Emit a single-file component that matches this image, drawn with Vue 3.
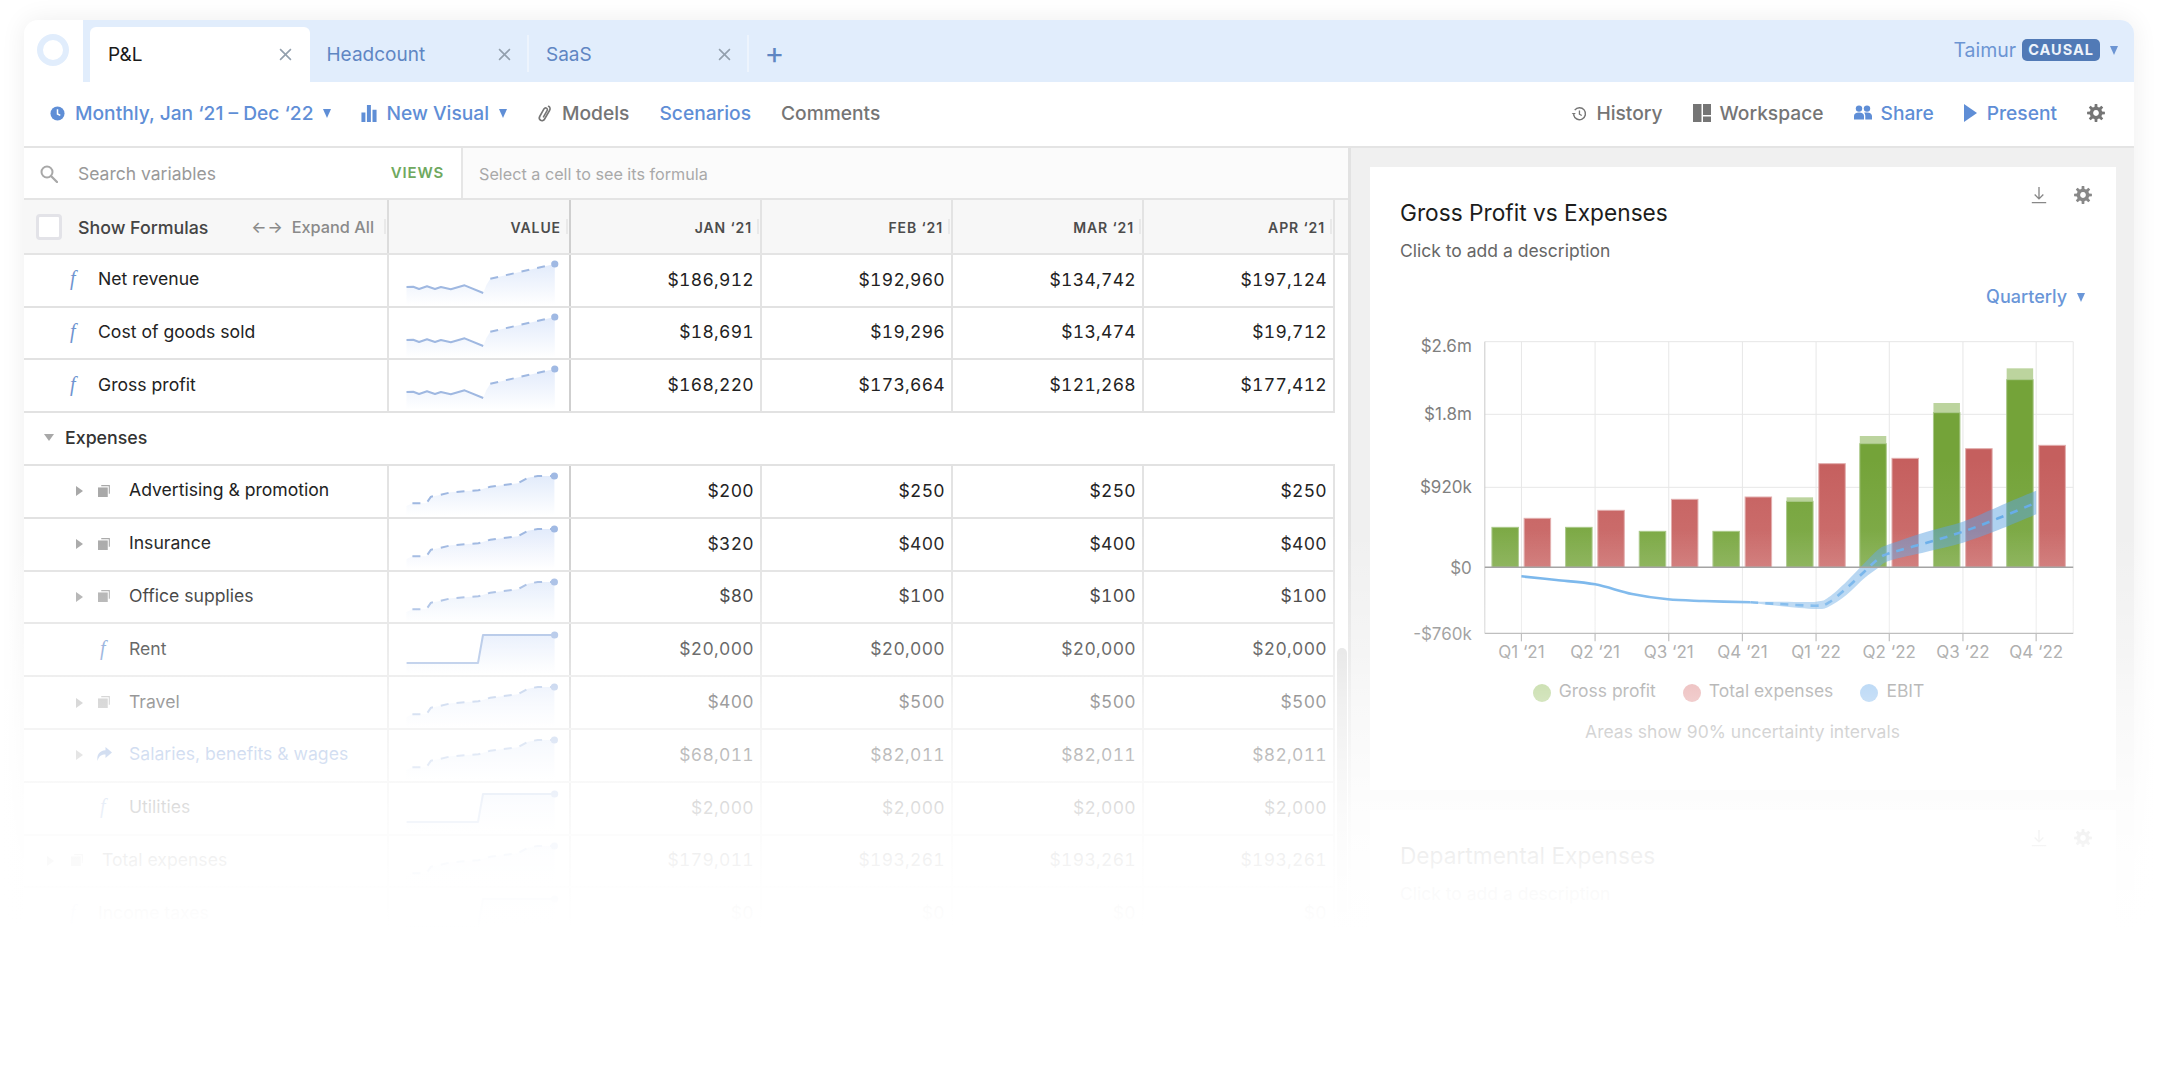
<script setup>
const zx = (v) => 1400 + v / 2.24 - 1370
const zy = (v) => 320 + v / 3 - 330
const Z = (pts) => pts.map(([x, y]) => [zx(x), zy(y)])

function smooth(pts, cont = false) {
  let d = cont ? '' : `M${pts[0][0].toFixed(1)} ${pts[0][1].toFixed(1)}`
  for (let i = 0; i < pts.length - 1; i++) {
    const p0 = pts[i - 1] || pts[i]
    const p1 = pts[i]
    const p2 = pts[i + 1]
    const p3 = pts[i + 2] || p2
    const c1 = [p1[0] + (p2[0] - p0[0]) / 6, p1[1] + (p2[1] - p0[1]) / 6]
    const c2 = [p2[0] - (p3[0] - p1[0]) / 6, p2[1] - (p3[1] - p1[1]) / 6]
    d += `C${c1[0].toFixed(1)} ${c1[1].toFixed(1)} ${c2[0].toFixed(1)} ${c2[1].toFixed(1)} ${p2[0].toFixed(1)} ${p2[1].toFixed(1)}`
  }
  return d
}

const gridX = [272, 437, 602, 767, 932, 1096, 1261, 1425].map(zx)
const quarterLabels = ['Q1 ‘21', 'Q2 ‘21', 'Q3 ‘21', 'Q4 ‘21', 'Q1 ‘22', 'Q2 ‘22', 'Q3 ‘22', 'Q4 ‘22']
const gridY = [283, 502].map(zy)
const top = zy(65)
const base = zy(742)
const bottom = zy(940)
const left = zx(190)
const right = zx(1508)
const yLabels = [
  ['$2.6m', zy(77)],
  ['$1.8m', zy(283)],
  ['$920k', zy(502)],
  ['$0', zy(745)],
  ['-$760k', zy(942)],
]
const greens = [[622], [622], [634], [634], [544, 532], [371, 348], [278, 249], [179, 145]]
const reds = [595, 571, 538, 531, 431, 415, 386, 376]
const bars = gridX.map((g, i) => ({
  x: g,
  gy: zy(greens[i][0]),
  ly: greens[i][1] ? zy(greens[i][1]) : null,
  ry: zy(reds[i]),
}))
const ebitSolid = smooth(Z([[272, 769], [350, 780], [437, 793], [520, 822], [600, 838], [680, 843], [785, 847]]))
const ebitDash = smooth(Z([[785, 847], [850, 852], [932, 857], [960, 848], [1000, 805], [1040, 755], [1070, 718], [1096, 700], [1180, 668], [1261, 635], [1340, 595], [1425, 548]]))
const upper = Z([[770, 846], [850, 845], [932, 845], [960, 832], [1000, 785], [1040, 730], [1070, 690], [1096, 673], [1180, 635], [1261, 605], [1340, 560], [1425, 512]])
const lower = Z([[1425, 583], [1340, 630], [1261, 668], [1180, 695], [1096, 722], [1070, 745], [1040, 775], [1000, 825], [960, 860], [932, 867], [850, 858], [770, 846]])
const band = smooth(upper) + `L${lower[0][0].toFixed(1)} ${lower[0][1].toFixed(1)}` + smooth(lower, true) + 'Z'

const sx = (v) => v / 2.529 - 389
const line = (pts) => 'M' + pts.map((p) => p.map((n) => n.toFixed(1)).join(' ')).join('L')
const A = (pts) => pts.map(([x, y]) => [sx(x), (y - 14) / 3])
const aSolid = A([[1028, 110], [1045, 109], [1060, 116], [1080, 108], [1100, 116], [1115, 110], [1140, 117], [1175, 105], [1222, 128]])
const aDash = A([[1240, 85], [1403, 41]])
const B = (pts) => pts.map(([x, y]) => [sx(x), (y - 645) / 3])
const bDash = B([[1043, 757], [1078, 757], [1090, 737], [1110, 733], [1140, 724], [1210, 718], [1240, 707], [1310, 697], [1335, 680], [1360, 675], [1402, 675]])
const cLine = [[17.6, 39], [89, 39], [94, 11], [165.6, 11]]
const H = 50
const sparks = {
  a: {
    solid: line(aSolid),
    dash: line(aDash),
    fill: line([...aSolid, [sx(1230), 30], ...aDash, [sx(1403), H], [sx(1028), H]]) + 'Z',
    dot: aDash[1],
  },
  b: {
    solid: '',
    dash: line(bDash),
    fill: line([[sx(1028), 40], ...bDash, [sx(1402), H], [sx(1028), H]]) + 'Z',
    dot: bDash[bDash.length - 1],
  },
  c: {
    solid: line(cLine),
    dash: '',
    fill: line([...cLine, [165.6, H], [17.6, H]]) + 'Z',
    dot: cLine[3],
  },
}

function gear() {
  const n = 8
  let d = ''
  for (let i = 0; i < n; i++) {
    const a = (i / n) * Math.PI * 2
    const w = Math.PI / n
    const pt = (r, t) => `${(10 + r * Math.cos(t)).toFixed(2)} ${(10 + r * Math.sin(t)).toFixed(2)}`
    d += `${i ? 'L' : 'M'}${pt(7, a - w * 0.62)}L${pt(10, a - w * 0.36)}L${pt(10, a + w * 0.36)}L${pt(7, a + w * 0.62)}`
  }
  return d + 'ZM10 6.8a3.2 3.2 0 1 0 .01 0Z'
}
const gearPath = gear()

const tabs = [
  { name: 'P&L', active: true },
  { name: 'Headcount' },
  { name: 'SaaS' },
]
const months = ['JAN ‘21', 'FEB ‘21', 'MAR ‘21', 'APR ‘21']
const rows = [
  { label: 'Net revenue', icon: 'f', lvl: 0, spark: 'a', vals: ['$186,912', '$192,960', '$134,742', '$197,124'] },
  { label: 'Cost of goods sold', icon: 'f', lvl: 0, spark: 'a', vals: ['$18,691', '$19,296', '$13,474', '$19,712'] },
  { label: 'Gross profit', icon: 'f', lvl: 0, spark: 'a', vals: ['$168,220', '$173,664', '$121,268', '$177,412'] },
  { section: 'Expenses' },
  { label: 'Advertising & promotion', icon: 'stack', lvl: 1, spark: 'b', vals: ['$200', '$250', '$250', '$250'] },
  { label: 'Insurance', icon: 'stack', lvl: 1, spark: 'b', vals: ['$320', '$400', '$400', '$400'] },
  { label: 'Office supplies', icon: 'stack', lvl: 1, spark: 'b', vals: ['$80', '$100', '$100', '$100'] },
  { label: 'Rent', icon: 'f', lvl: 1, spark: 'c', vals: ['$20,000', '$20,000', '$20,000', '$20,000'] },
  { label: 'Travel', icon: 'stack', lvl: 1, spark: 'b', vals: ['$400', '$500', '$500', '$500'] },
  { label: 'Salaries, benefits & wages', icon: 'link', lvl: 1, spark: 'b', vals: ['$68,011', '$82,011', '$82,011', '$82,011'] },
  { label: 'Utilities', icon: 'f', lvl: 1, spark: 'c', vals: ['$2,000', '$2,000', '$2,000', '$2,000'] },
  { label: 'Total expenses', icon: 'stack', lvl: 0, spark: 'b', vals: ['$179,011', '$193,261', '$193,261', '$193,261'] },
  { label: 'Income taxes', icon: 'f', lvl: 0, spark: 'c', vals: ['$0', '$0', '$0', '$0'] },
]
</script>

<template>
  <div class="page">
    <svg class="defs" width="0" height="0" aria-hidden="true">
      <defs>
        <linearGradient id="sparkFill" x1="0" y1="0" x2="0" y2="1">
          <stop offset="0" stop-color="#e2ebfb" />
          <stop offset="1" stop-color="#ffffff" />
        </linearGradient>
        <linearGradient id="greenBar" gradientUnits="userSpaceOnUse" x1="0" y1="130" x2="0" y2="237">
          <stop offset="0" stop-color="#74a339" />
          <stop offset="1" stop-color="#82ad4d" />
        </linearGradient>
        <linearGradient id="redBar" gradientUnits="userSpaceOnUse" x1="0" y1="130" x2="0" y2="237">
          <stop offset="0" stop-color="#c55f5e" />
          <stop offset="1" stop-color="#cd7170" />
        </linearGradient>
      </defs>
      <symbol id="i-gear" viewBox="0 0 20 20"><path :d="gearPath" fill="currentColor" fill-rule="evenodd" /></symbol>
      <symbol id="i-clock" viewBox="0 0 16 16">
        <circle cx="8" cy="8" r="7.5" fill="currentColor" />
        <path d="M8 3.5V8.5L11 10" fill="none" stroke="#fff" stroke-width="1.6" />
      </symbol>
      <symbol id="i-bars" viewBox="0 0 16 18">
        <path d="M0 8h4.2v10H0zM5.8 0H10v18H5.8zM11.7 5H16v13h-4.3z" fill="currentColor" />
      </symbol>
      <symbol id="i-link" viewBox="0 0 16 18">
        <path d="M11.8 1.4c1.7.9 2 2.8 1 4.4l-5.2 9c-.9 1.6-2.700 2.300-4.200 1.400s-1.800-2.700-.9-4.300l4.400-7.700c.6-1 1.800-1.400 2.700-.9s1.200 1.700.6 2.700l-3.800 6.600" fill="none" stroke="currentColor" stroke-width="1.700" stroke-linecap="round" />
      </symbol>
      <symbol id="i-history" viewBox="0 0 18 18">
        <path d="M4.200 5.200A6.700 6.700 0 1 1 3 10.500" fill="none" stroke="currentColor" stroke-width="1.600" />
        <path d="M.8 8.300h4.600L3.100 11z" fill="currentColor" />
        <path d="M9.500 5.500V9.800l2.600 1.500" fill="none" stroke="currentColor" stroke-width="1.500" />
      </symbol>
      <symbol id="i-work" viewBox="0 0 18 18">
        <path d="M0 0h8.500v18H0zM10 0h8v11h-8zM10 12.500h8V18h-8z" fill="currentColor" />
      </symbol>
      <symbol id="i-users" viewBox="0 0 18 16">
        <circle cx="5" cy="3.600" r="3.200" fill="currentColor" />
        <circle cx="13" cy="3.600" r="3.200" fill="currentColor" />
        <path d="M0 14.500V11c0-2 1.800-3.500 5-3.500S10 9 10 11v3.500zM11.300 14.500V11c0-1.300-.4-2.500-1.300-3.200.8-.3 1.800-.4 3-.4 3.200 0 5 1.600 5 3.600v3.500z" fill="currentColor" />
      </symbol>
      <symbol id="i-play" viewBox="0 0 13 18"><path d="M0 0l13 9L0 18z" fill="currentColor" /></symbol>
      <symbol id="i-down" viewBox="0 0 18 20">
        <path d="M9 1v13M4.200 9.500L9 14.300l4.800-4.800M1 18.500h16" fill="none" stroke="currentColor" stroke-width="1.500" />
      </symbol>
      <symbol id="i-search" viewBox="0 0 18 18">
        <circle cx="7" cy="7" r="5.500" fill="none" stroke="currentColor" stroke-width="2" />
        <path d="M11 11l6 6" fill="none" stroke="currentColor" stroke-width="2.300" stroke-linecap="round" />
      </symbol>
      <symbol id="i-stack" viewBox="0 0 14 14">
        <path d="M3.500 1.800h8.700v8.700" fill="none" stroke="currentColor" stroke-width="1.200" />
        <path d="M0 3.700h10.500V14H0z" fill="currentColor" />
      </symbol>
      <symbol id="i-reply" viewBox="0 0 16 14">
        <path d="M9.500 0L16 5.500 9.500 11V7.600C5.500 7.600 3 8.700 1.600 14 .4 8 3.500 3.500 9.500 3.300z" fill="currentColor" />
      </symbol>
    </svg>

    <div class="app">
      <header class="tabbar">
        <div class="logo"><span class="ring"></span></div>
        <div class="tabs">
          <div v-for="t in tabs" :key="t.name" class="tab" :class="{ active: t.active }">
            <span>{{ t.name }}</span>
            <svg class="close" viewBox="0 0 12 12"><path d="M1 1l10 10M11 1L1 11" /></svg>
          </div>
          <div class="plus">+</div>
          <div class="user">
            <span>Taimur</span>
            <b class="badge">CAUSAL</b>
            <i class="caret"></i>
          </div>
        </div>
      </header>

      <nav class="toolbar">
        <div class="tool blue"><svg class="ic w15"><use href="#i-clock" /></svg>Monthly, Jan ‘21 – Dec ‘22<i class="caret"></i></div>
        <div class="tool blue"><svg class="ic w16"><use href="#i-bars" /></svg>New Visual<i class="caret"></i></div>
        <div class="tool"><svg class="ic w16"><use href="#i-link" /></svg>Models</div>
        <div class="tool blue">Scenarios</div>
        <div class="tool">Comments</div>
        <div class="spacer"></div>
        <div class="tool"><svg class="ic w16"><use href="#i-history" /></svg>History</div>
        <div class="tool"><svg class="ic w18"><use href="#i-work" /></svg>Workspace</div>
        <div class="tool blue"><svg class="ic w18"><use href="#i-users" /></svg>Share</div>
        <div class="tool blue"><svg class="ic w13"><use href="#i-play" /></svg>Present</div>
        <svg class="ic w18 gear"><use href="#i-gear" /></svg>
      </nav>

      <main class="main">
        <section class="sheet">
          <div class="searchrow">
            <div class="search">
              <svg class="ic w18 sicon"><use href="#i-search" /></svg>
              <span class="sph">Search variables</span>
              <span class="views">VIEWS</span>
            </div>
            <div class="formula">Select a cell to see its formula</div>
          </div>

          <div class="grid head">
            <div class="cell name handle">
              <span class="check"></span>
              <span class="showf">Show Formulas</span>
              <span class="expand"><span class="arrows">←→</span>Expand All</span>
            </div>
            <div class="cell val hdr spk handle">VALUE</div>
            <div v-for="m in months" :key="m" class="cell val hdr handle">{{ m }}</div>
            <div class="gutter"></div>
          </div>

          <template v-for="r in rows" :key="r.label || r.section">
            <div v-if="r.section" class="section">
              <i class="tri-down"></i>{{ r.section }}
            </div>
            <div v-else class="grid row">
              <div class="cell name" :class="'lvl' + r.lvl">
                <i v-if="r.icon !== 'f'" class="tri-right"></i>
                <span v-if="r.icon === 'f'" class="fx">f</span>
                <svg v-else-if="r.icon === 'stack'" class="stack"><use href="#i-stack" /></svg>
                <svg v-else class="reply"><use href="#i-reply" /></svg>
                <span class="label" :class="{ linked: r.icon === 'link' }">{{ r.label }}</span>
              </div>
              <div class="cell spk">
                <svg class="spark" width="180" height="50">
                  <path :d="sparks[r.spark].fill" fill="url(#sparkFill)" />
                  <path v-if="sparks[r.spark].solid" :d="sparks[r.spark].solid" class="sp-line" />
                  <path v-if="sparks[r.spark].dash" :d="sparks[r.spark].dash" class="sp-line sp-dash" />
                  <circle :cx="sparks[r.spark].dot[0]" :cy="sparks[r.spark].dot[1]" r="3.600" fill="#a0b9e3" />
                </svg>
              </div>
              <div v-for="(v, i) in r.vals" :key="i" class="cell val num">{{ v }}</div>
            </div>
          </template>
          <span class="thumb"></span>
        </section>

        <aside class="side">
          <article class="card first">
            <div class="card-head">
              <h2>Gross Profit vs Expenses</h2>
              <div class="actions">
                <svg class="ic w18"><use href="#i-down" /></svg>
                <svg class="ic w18"><use href="#i-gear" /></svg>
              </div>
            </div>
            <p class="desc">Click to add a description</p>
            <div class="period">Quarterly<i class="caret"></i></div>
            <svg class="chart" width="746" height="340">
              <g class="gridlines">
                <line v-for="x in gridX" :key="x" :x1="x" :x2="x" :y1="top" :y2="bottom" />
                <line v-for="y in gridY" :key="y" :x1="left" :x2="right" :y1="y" :y2="y" />
                <line :x1="left" :x2="right" :y1="top" :y2="top" />
                <line :x1="right" :x2="right" :y1="top" :y2="bottom" />
              </g>
              <g v-for="b in bars" :key="b.x">
                <rect v-if="b.ly" :x="b.x - 29.5" :y="b.ly" width="26.5" :height="b.gy - b.ly" class="bar-light" />
                <rect :x="b.x - 29.5" :y="b.gy" width="26.5" :height="base - b.gy" fill="url(#greenBar)" class="bar-g" />
                <rect :x="b.x + 2.7" :y="b.ry" width="26.5" :height="base - b.ry" fill="url(#redBar)" class="bar-r" />
              </g>
              <path :d="band" class="band" />
              <path :d="ebitSolid" class="ebit" />
              <path :d="ebitDash" class="ebit dash" />
              <line :x1="left" :x2="left" :y1="top" :y2="bottom" class="axis-l" />
              <line :x1="left" :x2="right" :y1="base" :y2="base" class="axis-0" />
              <line :x1="left" :x2="right" :y1="bottom" :y2="bottom" class="axis-b" />
              <line v-for="x in gridX" :key="'t' + x" :x1="x" :x2="x" :y1="bottom" :y2="bottom + 8" class="axis-b" />
              <text v-for="l in yLabels" :key="l[0]" :x="left - 13" :y="l[1]" text-anchor="end" dominant-baseline="central" class="ylab">{{ l[0] }}</text>
              <text v-for="(q, i) in quarterLabels" :key="q" :x="gridX[i]" :y="322" text-anchor="middle" dominant-baseline="central" class="xlab">{{ q }}</text>
            </svg>
            <div class="legend">
              <span class="lg"><i class="dot d-g"></i>Gross profit</span>
              <span class="lg"><i class="dot d-r"></i>Total expenses</span>
              <span class="lg"><i class="dot d-b"></i>EBIT</span>
            </div>
            <p class="foot">Areas show 90% uncertainty intervals</p>
          </article>
          <article class="card">
            <div class="card-head">
              <h2>Departmental Expenses</h2>
              <div class="actions">
                <svg class="ic w18"><use href="#i-down" /></svg>
                <svg class="ic w18"><use href="#i-gear" /></svg>
              </div>
            </div>
            <p class="desc">Click to add a description</p>
          </article>
        </aside>
      </main>
    </div>
    <div class="fade"></div>
  </div>
</template>

<style>
html, body { margin: 0; background: #fff; }
</style>

<style scoped>
.page {
  position: relative;
  width: 2158px;
  height: 1074px;
  overflow: hidden;
  padding: 20px 24px 0;
  box-sizing: border-box;
  background: #fff;
  font-family: Inter, "Noto Sans", sans-serif;
  color: #222;
}
.defs { position: absolute; }
.app {
  height: 1100px;
  background: #fff;
  border-radius: 14px 14px 0 0;
  box-shadow: 0 0 26px rgba(0, 0, 0, 0.07);
  display: flex;
  flex-direction: column;
  overflow: hidden;
}
.fade {
  position: absolute;
  left: 0;
  right: 0;
  top: 530px;
  bottom: 0;
  pointer-events: none;
  background: linear-gradient(
    to bottom,
    rgba(255, 255, 255, 0) 0,
    rgba(255, 255, 255, 0.33) 120px,
    rgba(255, 255, 255, 0.55) 170px,
    rgba(255, 255, 255, 0.86) 280px,
    rgba(255, 255, 255, 0.94) 330px,
    #fff 400px
  );
}

/* tab bar */
.tabbar { height: 62px; display: flex; flex: none; }
.logo { width: 59px; display: flex; align-items: center; justify-content: center; padding-left: 0; }
.ring {
  width: 32px;
  height: 32px;
  box-sizing: border-box;
  border: 6px solid #e1edfc;
  border-radius: 50%;
  margin-top: -2px;
  margin-left: -2px;
}
.tabs {
  flex: 1;
  background: #e1edfc;
  display: flex;
  align-items: flex-end;
  padding-left: 7px;
  color: #5f86c3;
}
.tab {
  width: 219.500px;
  height: 55px;
  box-sizing: border-box;
  display: flex;
  align-items: center;
  justify-content: space-between;
  padding: 0 18px 0 17px;
  font-size: 19px;
  position: relative;
}
.tab.active { background: #fff; color: #1a1a1a; border-radius: 6px 6px 0 0; padding-left: 18px; }
.tab:not(.active)::after {
  content: "";
  position: absolute;
  right: 0;
  top: 8px;
  bottom: 10px;
  width: 2px;
  background: #edf4fd;
}
.close { width: 13px; height: 13px; fill: none; stroke: #93a0ae; stroke-width: 1.5; }
.plus { font-size: 30px; font-weight: 400; color: #5f86c3; margin-left: 16px; height: 55px; line-height: 52px; }
.user {
  margin-left: auto;
  display: flex;
  align-items: center;
  height: 62px;
  align-self: flex-start;
  padding-right: 16px;
  font-size: 19.500px;
  color: #6c95d3;
  margin-top: -1px;
}
.badge {
  background: #517ab6;
  color: #edf3fb;
  font-size: 14.500px;
  font-weight: 700;
  letter-spacing: 1px;
  padding: 0 6px;
  line-height: 22px;
  border-radius: 5px;
  margin-left: 6px;
}
.caret {
  display: inline-block;
  width: 0;
  height: 0;
  border-left: 4.500px solid transparent;
  border-right: 4.500px solid transparent;
  border-top: 9px solid currentColor;
  margin-left: 10px;
}

/* toolbar */
.toolbar {
  flex: none;
  height: 66px;
  box-sizing: border-box;
  border-bottom: 2px solid #e4e4e4;
  display: flex;
  align-items: center;
  padding: 0 29px 2px 26px;
  gap: 30px;
  font-size: 19.200px;
  font-weight: 500;
  color: #757575;
}
.tool { display: flex; align-items: center; white-space: nowrap; }
.blue { color: #5f8ed6; }
.spacer { flex: 1; }
.ic { flex: none; display: block; }
.w13 { width: 13px; height: 18px; margin-right: 10px; }
.w15 { width: 15px; height: 15px; margin-right: 10px; }
.w16 { width: 16px; height: 17px; margin-right: 9px; }
.w18 { width: 18px; height: 18px; margin-right: 9px; }
.gear { margin-right: 0; }

/* layout */
.main { flex: 1; display: flex; min-height: 0; }
.sheet {
  width: 1327px;
  flex: none;
  box-sizing: border-box;
  border-right: 3px solid #e2e2e2;
  position: relative;
}
.side {
  flex: 1;
  min-width: 0;
  background: #f0f0f0;
  padding: 19px 18px 0 19px;
  display: flex;
  flex-direction: column;
  gap: 20px;
}

/* search row */
.searchrow { display: flex; height: 52px; box-sizing: border-box; border-bottom: 2px solid #e4e4e4; }
.search { width: 439px; display: flex; align-items: center; box-sizing: border-box; padding: 1px 17px 0 16px; border-right: 2px solid #e6e6e6; }
.sicon { color: #a8a8a8; margin-right: 20px; width: 18px; height: 18px; }
.sph { font-size: 17.500px; color: #999; }
.views { margin-left: auto; font-size: 15px; font-weight: 600; color: #6fa95f; letter-spacing: 0.8px; margin-top: -2px; }
.formula { flex: 1; display: flex; align-items: center; padding: 1px 0 0 16px; background: #fbfbfb; font-size: 16.200px; color: #a9a9a9; }

/* table */
.grid { display: grid; grid-template-columns: 365px 182px repeat(4, 191px) 13px; }
.head { height: 54.800px; box-sizing: border-box; background: #f7f7f7; border-bottom: 2px solid #e4e4e4; }
.row { height: 52.800px; box-sizing: border-box; border-bottom: 2px solid #e2e2e2; grid-template-columns: 365px 182px repeat(4, 191px); width: 1311px; }
.cell { border-right: 2px solid #e3e3e3; box-sizing: border-box; display: flex; align-items: center; min-width: 0; position: relative; }
.cell.spk { border-right-color: #cfcfcf; }
.cell.name { white-space: nowrap; }
.head .cell { padding-top: 2px; }
.head .cell.name { padding-left: 12px; border-right-color: #dcdcdc; }
.handle::after {
  content: "";
  position: absolute;
  right: 1px;
  top: 19px;
  width: 2px;
  height: 15px;
  background: #e9e9e9;
}
.check { width: 26px; height: 26px; box-sizing: border-box; border: 3px solid #e3e3e8; border-radius: 4px; background: #fff; margin-right: 16px; flex: none; }
.showf { font-size: 17.800px; font-weight: 500; color: #444; }
.expand { margin-left: auto; margin-right: 13px; font-size: 16.300px; font-weight: 500; color: #8a8a8a; display: flex; align-items: center; }
.arrows { margin-right: 8px; letter-spacing: 1px; font-size: 16px; }
.val { justify-content: flex-end; padding-right: 5px; font-size: 17.500px; color: #222; letter-spacing: 0.3px; }
.num { font-variant-numeric: tabular-nums; padding-right: 6px; padding-bottom: 2px; }
.hdr { font-size: 14px; font-weight: 600; letter-spacing: 0.9px; color: #4c4c4c; padding-right: 8px; }
.gutter { background: #f7f7f7; }
.lvl0 { padding-left: 44px; }
.lvl1 { padding-left: 52px; }
.label { font-size: 17.600px; color: #222; padding-bottom: 3px; }
.linked { color: #6d93d2; }
.fx {
  font-family: "Liberation Serif", serif;
  font-style: italic;
  font-size: 20px;
  color: #6f94d0;
  width: 8px;
  margin-right: 20px;
  margin-left: 2px;
  margin-top: -3px;
}
.lvl1 .fx { margin-left: 24px; margin-right: 21px; }
.tri-right {
  width: 0;
  height: 0;
  border-top: 5.500px solid transparent;
  border-bottom: 5.500px solid transparent;
  border-left: 7px solid #a8a8a8;
  margin-right: 15px;
  flex: none;
}
.lvl0 .tri-right { margin-left: -21px; margin-right: 17px; }
.stack { width: 13px; height: 13px; color: #a9a9a9; margin-right: 18px; flex: none; margin-top: -2px; }
.reply { width: 16px; height: 14px; color: #6d93d2; margin-right: 17px; flex: none; margin-left: -2px; margin-top: -3px; }
.section {
  height: 52.800px;
  box-sizing: border-box;
  border-bottom: 2px solid #e2e2e2;
  width: 1311px;
  display: flex;
  align-items: center;
  padding: 0 0 3px 20px;
  font-size: 17.800px;
  font-weight: 500;
  color: #333;
}
.tri-down {
  width: 0;
  height: 0;
  border-left: 5.500px solid transparent;
  border-right: 5.500px solid transparent;
  border-top: 7px solid #a8a8a8;
  margin-right: 11px;
}
.spark { display: block; overflow: visible; align-self: flex-start; }
.sp-line { fill: none; stroke: #9fb8e1; stroke-width: 2; stroke-linejoin: round; }
.sp-dash { stroke-dasharray: 8 8; }
.thumb {
  position: absolute;
  left: 1313px;
  top: 500px;
  width: 10px;
  height: 400px;
  background: #dedede;
  border-radius: 5px;
}

/* cards */
.card {
  background: #fff;
  box-sizing: border-box;
  padding: 31px 24px 46px 30px;
  flex: none;
}
.card.first { height: 623px; }
.card-head { display: flex; justify-content: space-between; align-items: flex-start; }
.card h2 { margin: 0; font-size: 22.700px; line-height: 30px; font-weight: 400; color: #1c1c1c; }
.actions { display: flex; gap: 26px; margin-top: -12px; color: #888; }
.actions .ic { margin-right: 0; }
.desc { margin: 11px 0 0; font-size: 17.500px; line-height: 24px; color: #666; }
.period { margin-top: 22px; margin-right: 7px; display: flex; justify-content: flex-end; align-items: center; line-height: 24px; font-size: 18px; font-weight: 500; color: #6a96d8; }
.chart { display: block; margin: 21px 0 0 -30px; overflow: visible; }
.gridlines line { stroke: #e7e7e7; stroke-width: 1; }
.axis-l { stroke: #c9c9c9; stroke-width: 1; }
.axis-0 { stroke: #9a9a9a; stroke-width: 1.500; }
.axis-b { stroke: #a6a6a6; stroke-width: 1.200; }
.bar-light { fill: #bcd49e; }
.bar-g { stroke: #a9c888; stroke-width: 1; }
.bar-r { stroke: #e2adad; stroke-width: 1; }
.band { fill: #5da4e2; fill-opacity: 0.5; }
.ebit { fill: none; stroke: #68ade9; stroke-width: 2.600; }
.ebit.dash { stroke-dasharray: 8 7; }
.ylab { font-size: 17px; fill: #7f7f7f; }
.xlab { font-size: 17px; fill: #888; }
.legend { margin: 9px 0 0 -35px; display: flex; justify-content: center; gap: 27px; font-size: 17.500px; line-height: 24px; color: #777; }
.lg { display: flex; align-items: center; }
.dot { width: 18px; height: 18px; border-radius: 50%; margin-right: 8px; margin-top: 3px; }
.d-g { background: #a0c56f; }
.d-r { background: #e08f8f; }
.d-b { background: #83b9ee; }
.foot { margin: 17px 0 0 -7px; text-align: center; font-size: 17.500px; line-height: 24px; color: #888; }
</style>
